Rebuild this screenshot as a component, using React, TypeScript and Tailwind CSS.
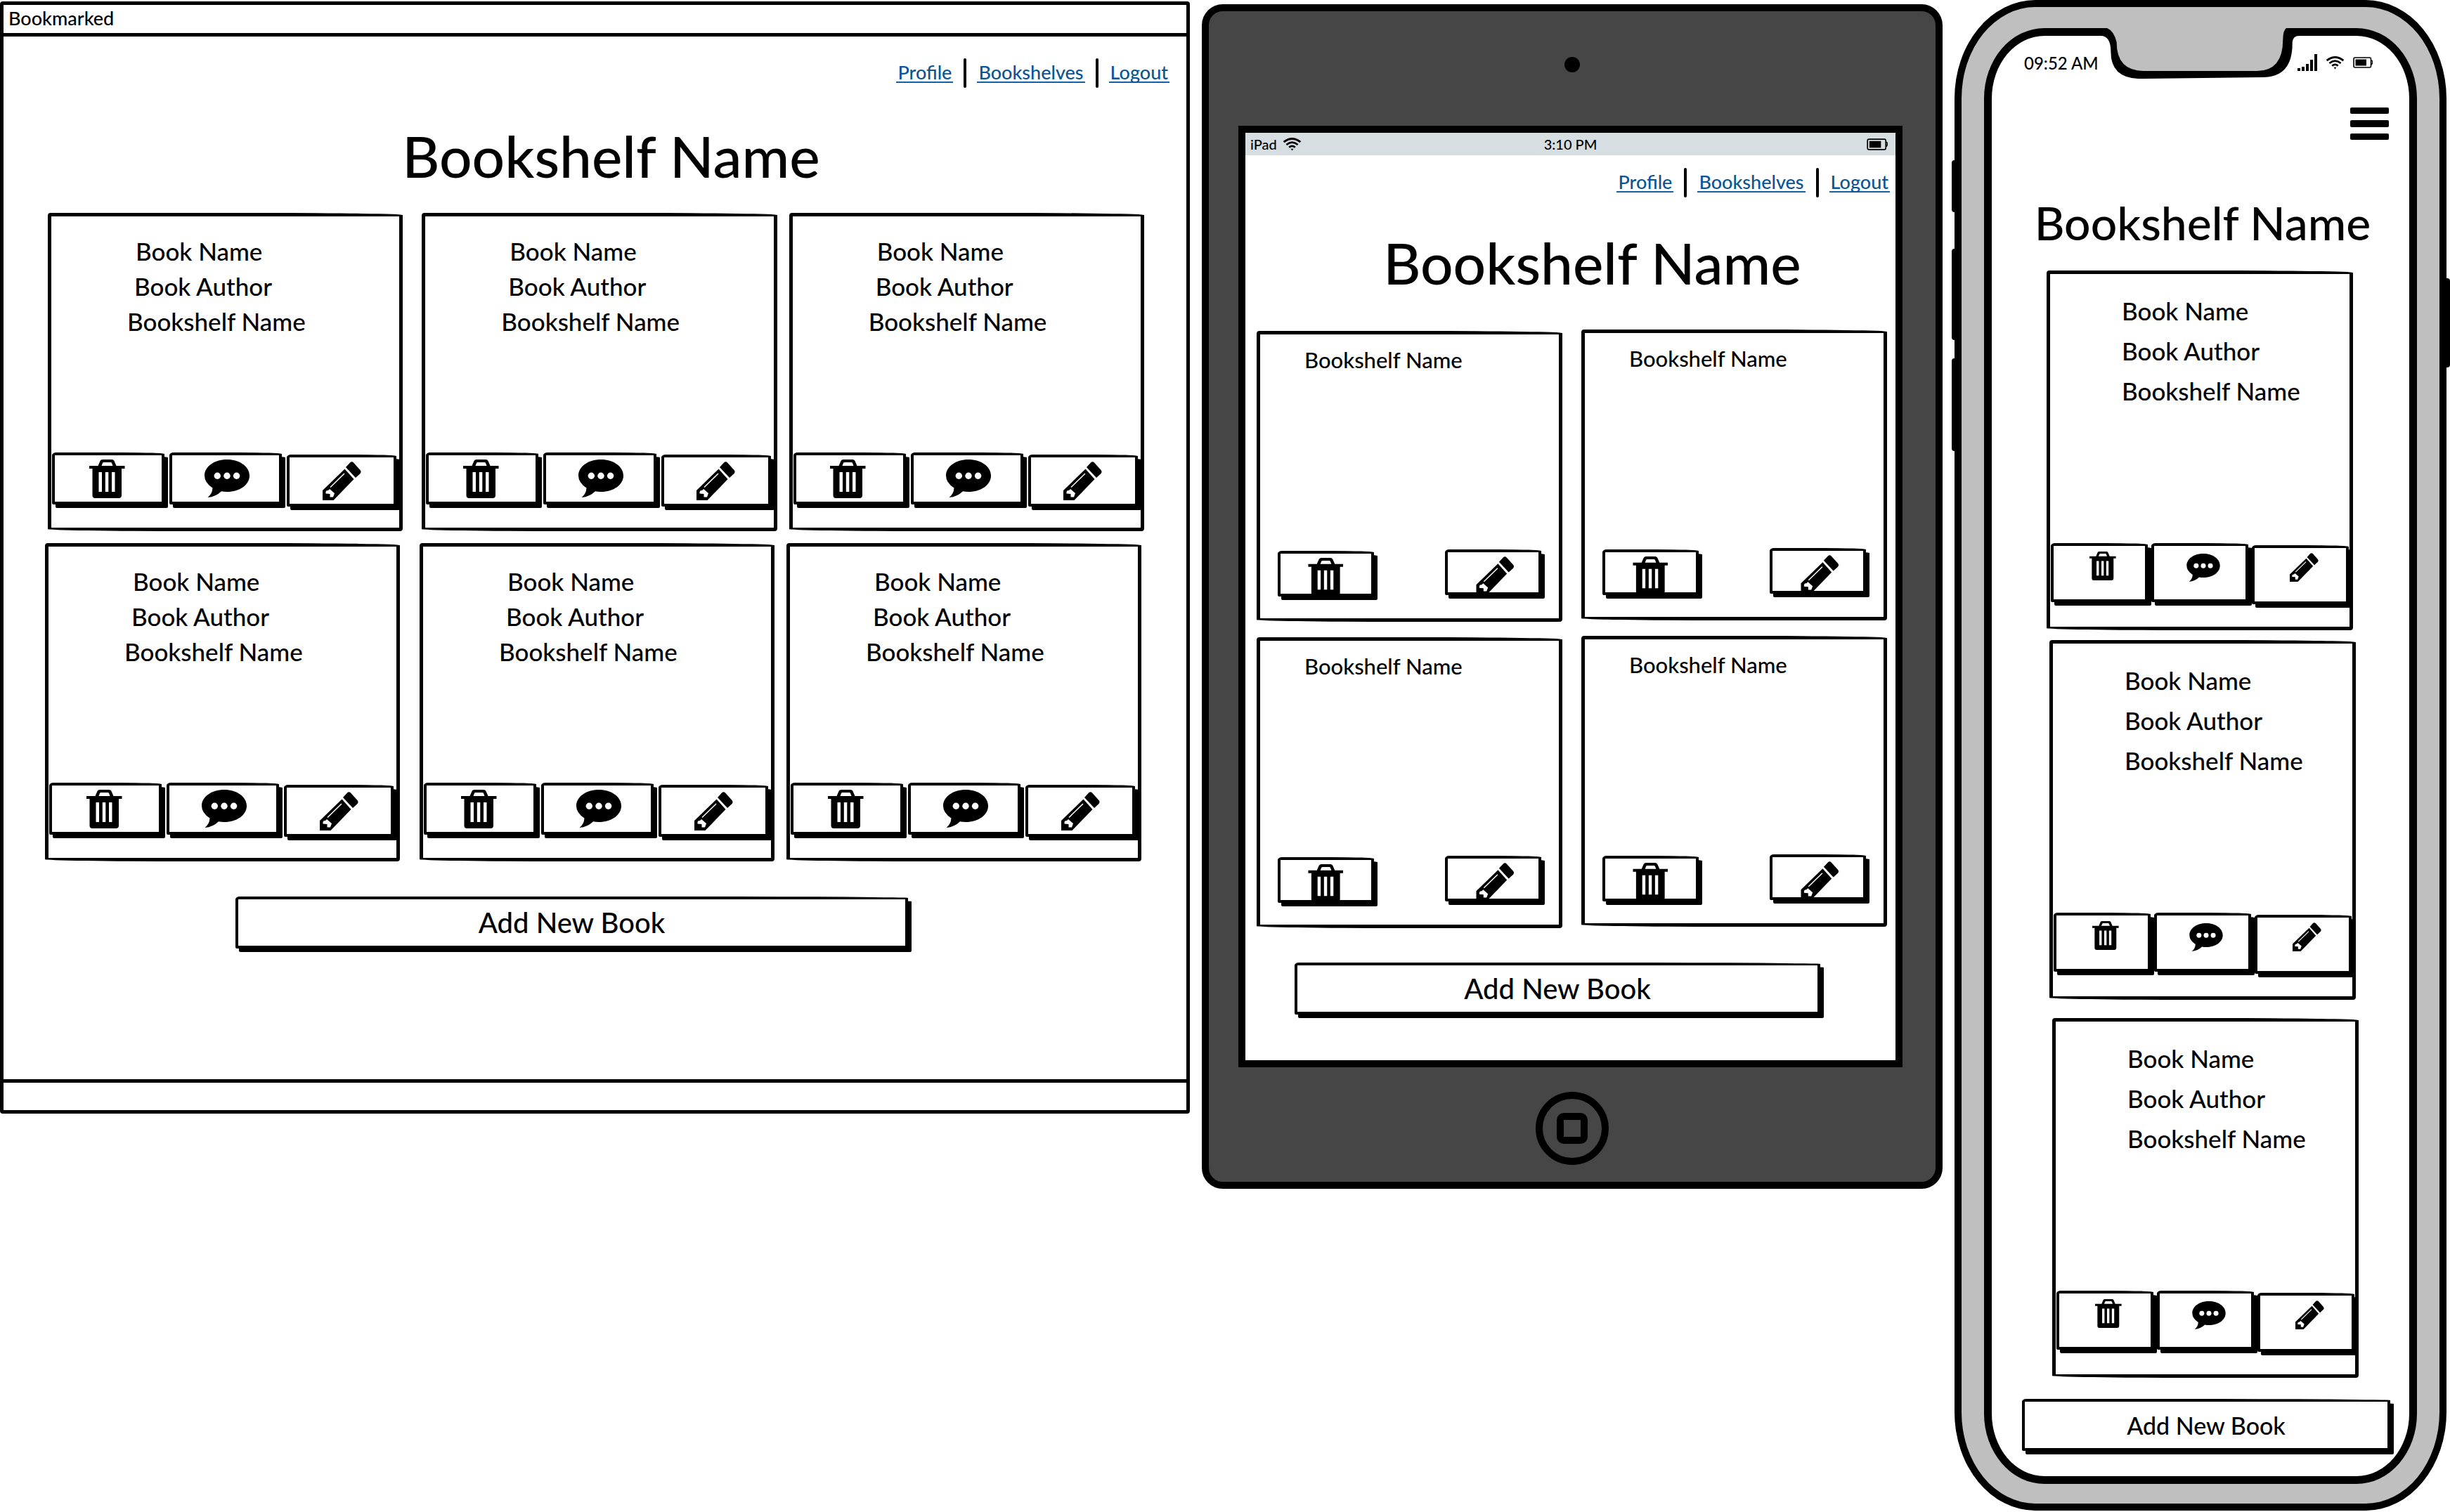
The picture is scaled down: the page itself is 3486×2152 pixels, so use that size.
import React from "react";

type Size = "desktop" | "tablet" | "phone";

const TrashIcon = ({ className }: { className: string }) => (
  <svg viewBox="0 0 51 55" className={className} aria-hidden="true">
    <path
      fillRule="evenodd"
      d="M12.5 9 15.5 2Q16.5 0 19 0H32Q34.500 0 35.500 2L38.500 9H50.500V13H46V51Q46 55 42 55H8.500Q4.500 55 4.500 51V13H0V9ZM17.500 9H33.500L32 5Q31.500 4 30.500 4H20.500Q19.500 4 19 5ZM13.500 18V46H18V18ZM22.800 18V46H27.300V18ZM32 18V46H36.500V18Z"
    />
  </svg>
);

const ChatIcon = ({ className }: { className: string }) => (
  <svg viewBox="0 0 64 54" className={className} aria-hidden="true">
    <path d="M32 0C50 0 64 10 64 23S50 46 32 46Q27.500 46 24 45.200Q16 53 4.500 54Q11 49 11.500 40.500Q0 33 0 23C0 10 14 0 32 0Z" />
    <g fill="#fff">
      <circle cx="18.300" cy="23.200" r="4.700" />
      <circle cx="32" cy="23.200" r="4.700" />
      <circle cx="45.600" cy="23.200" r="4.700" />
    </g>
  </svg>
);

const PencilIcon = ({ className }: { className: string }) => (
  <svg viewBox="0 0 55 55" className={className} aria-hidden="true">
    <path d="M0 41 31.500 10.500 44.500 25 15.500 55H0Z" />
    <path d="M33 8 39 1.500Q41.500-.8 44 1.500L53.500 12Q55.500 14.500 53.500 17L47 23Z" />
    <path d="M11 36.500 31 17" stroke="#fff" strokeWidth="1.500" />
    <path fill="#fff" d="M4.500 43Q5 40.500 8 41L10 39 17 45 15 50.500 10.500 50.500V46L4.500 45.500Z" />
  </svg>
);

const WifiIcon = ({ className }: { className: string }) => (
  <svg viewBox="0 0 27 20" className={className} aria-hidden="true" fill="none" stroke="#000" strokeWidth="3">
    <path d="M1 6.500Q13.500-3.500 26 6.500" />
    <path d="M5 10.500Q13.500 3.500 22 10.500" />
    <path d="M9 14.500Q13.500 10.500 18 14.500" />
    <path d="M11.500 16.500H15.500L13.500 19.500Z" fill="#000" stroke="none" />
  </svg>
);

const BatteryIcon = ({ className }: { className: string }) => (
  <svg viewBox="0 0 28 16" className={className} aria-hidden="true">
    <rect x="1" y="1" width="24.500" height="14" rx="2" fill="none" stroke="#000" strokeWidth="1.600" />
    <rect x="3.500" y="3.500" width="15.500" height="9" />
    <path d="M25.500 5Q28 5 27.500 8T25.500 11" fill="none" stroke="#000" strokeWidth="1.600" />
  </svg>
);

const SignalIcon = ({ className }: { className: string }) => (
  <svg viewBox="0 0 28 24" className={className} aria-hidden="true">
    <path d="M0 20H4V24H0ZM6 18H10V24H6ZM12 14H16V24H12ZM18 8H22V24H18ZM24 0H28V24H24Z" />
  </svg>
);

const icons = { Delete: TrashIcon, Comment: ChatIcon, Edit: PencilIcon };

const inset = {
  desktop: { Delete: "pt-[6px] pr-[4px]", Comment: "pt-[6px] pl-[4px]", Edit: "pt-[6px]" },
  tablet: { Delete: "pt-[6px]", Comment: "pt-[6px]", Edit: "pt-[6px] pl-[6px]" },
  phone: { Delete: "pt-[8px] pl-[10px]", Comment: "pt-[11px] pl-[10px]", Edit: "pt-[7px] pl-[10px]" },
};

const box = { desktop: "h-[74px] flex-1", tablet: "h-[65px] w-[137px]", phone: "h-[84px] flex-1" };

const glyph = {
  desktop: { Delete: "h-[55px] w-[51px]", Comment: "h-[54px] w-[64px]", Edit: "h-[55px] w-[55px]" },
  tablet: { Delete: "h-[54px] w-[51px]", Comment: "h-[54px] w-[64px]", Edit: "h-[54px] w-[55px]" },
  phone: { Delete: "h-[41px] w-[38px]", Comment: "h-[40px] w-[48px]", Edit: "h-[41px] w-[41px]" },
};

function ActionButton({ kind, size }: { kind: keyof typeof icons; size: Size }) {
  const Icon = icons[kind];
  return (
    <button
      type="button"
      aria-label={kind}
      className={`flex items-start justify-center rounded-[6px_60px_2px_2px/4px_2px_2px_2px] border-[4px] border-black bg-white shadow-[5px_5px_0_#000] ${box[size]} ${inset[size][kind]} ${
        kind === "Edit" && size !== "tablet" ? "mt-[3px]" : ""
      }`}
    >
      <Icon className={`shrink-0 ${glyph[size][kind]}`} />
    </button>
  );
}

const outline = "rounded-[4px_200px_4px_200px/4px_3px_4px_3px] border-[5px] border-black";

function BookCard({ size, className = "" }: { size: "desktop" | "phone"; className?: string }) {
  const desktop = size === "desktop";
  return (
    <article
      className={`flex flex-col text-[35px] ${outline} ${
        desktop ? "h-[453px] min-w-0 flex-1 pt-[24px] leading-[50px]" : "h-[512px] pt-[24px] leading-[57px]"
      } ${className}`}
    >
      <h2 className={desktop ? "pl-[120px]" : "pl-[102px]"}>Book Name</h2>
      <p className={desktop ? "pl-[118px]" : "pl-[102px]"}>Book Author</p>
      <p className={desktop ? "pl-[108px]" : "pl-[102px]"}>Bookshelf Name</p>
      <div className={`mt-auto flex ${desktop ? "mb-[30px] gap-[7px] pr-[4px] pl-px" : "mb-[32px] gap-[5px] pr-px pl-px"}`}>
        <ActionButton kind="Delete" size={size} />
        <ActionButton kind="Comment" size={size} />
        <ActionButton kind="Edit" size={size} />
      </div>
    </article>
  );
}

function ShelfCard() {
  return (
    <article className={`flex h-[414px] min-w-0 flex-1 flex-col pt-[16px] ${outline}`}>
      <h2 className="pl-[63px] text-[31px] leading-[40px]">Bookshelf Name</h2>
      <div className="mt-auto mb-[31px] flex items-start justify-between pr-[25px] pl-[25px]">
        <div className="pt-[2px]">
          <ActionButton kind="Delete" size="tablet" />
        </div>
        <ActionButton kind="Edit" size="tablet" />
      </div>
    </article>
  );
}

const navLink = "border-b-2 border-[#1462a5] px-[2px] text-[27px] leading-[26px] text-[#0b5596]";

function Nav({ className }: { className: string }) {
  return (
    <nav className={`flex items-center justify-end gap-[15px] ${className}`}>
      <a href="#profile" className={navLink}>Profile</a>
      <span className="h-[42px] w-[4px] rounded-full bg-black" />
      <a href="#bookshelves" className={navLink}>Bookshelves</a>
      <span className="h-[42px] w-[4px] rounded-full bg-black" />
      <a href="#logout" className={navLink}>Logout</a>
    </nav>
  );
}

function AddButton({ className }: { className: string }) {
  return (
    <button
      type="button"
      className={`block h-[74px] rounded-[6px_300px_2px_2px/4px_2px_2px_2px] border-[4px] border-black bg-white text-center shadow-[5px_5px_0_#000] ${className}`}
    >
      Add New Book
    </button>
  );
}

function Desktop() {
  return (
    <section className="mt-[2px] flex h-[1583px] flex-col rounded-[4px] border-[5px] border-black">
      <header className="flex h-[45px] shrink-0 items-center border-b-[5px] border-black pb-[3px] pl-[7px] text-[27px] leading-[32px]">
        Bookmarked
      </header>
      <Nav className="mt-[31px] pr-[24px]" />
      <h1 className="mt-[48px] pl-[46px] text-center text-[82px] leading-[96px]">Bookshelf Name</h1>
      <div className="mt-[34px] flex pr-[60px] pl-[63px]">
        <BookCard size="desktop" />
        <BookCard size="desktop" className="ml-[27px]" />
        <BookCard size="desktop" className="ml-[17px]" />
      </div>
      <div className="mt-[17px] flex pr-[64px] pl-[59px]">
        <BookCard size="desktop" />
        <BookCard size="desktop" className="ml-[28px]" />
        <BookCard size="desktop" className="ml-[17px]" />
      </div>
      <AddButton className="mt-[50px] mr-[396px] ml-[330px] text-[40px]" />
      <footer className="mt-auto h-[44px] border-t-[5px] border-black" />
    </section>
  );
}

function Tablet() {
  return (
    <section className="mr-px ml-px mt-[6px] rounded-[30px] border-[10px] border-black bg-[#464646] pr-[47px] pb-[24px] pl-[42px]">
      <div className="flex justify-center pt-[65px] pl-[5px]">
        <span className="h-[22px] w-[22px] rounded-full bg-black" />
      </div>
      <div className="mt-[76px] flex h-[1340px] flex-col border-[10px] border-black bg-white">
        <header className="grid h-[32px] shrink-0 grid-cols-3 items-center bg-[#d7dee1] px-[7px] text-[20px] leading-[30px]">
          <span className="flex items-center gap-[8px]">
            iPad <WifiIcon className="h-[19px] w-[27px]" />
          </span>
          <time className="text-center">3:10 PM</time>
          <BatteryIcon className="mr-[4px] h-[17px] w-[30px] justify-self-end" />
        </header>
        <Nav className="mt-[18px] pr-[8px]" />
        <h1 className="mt-[44px] pl-[62px] text-center text-[82px] leading-[96px]">Bookshelf Name</h1>
        <div className="mt-[48px] flex gap-[27px] pr-[12px] pl-[16px]">
          <div className="flex flex-1 flex-col gap-[22px] pt-[2px]">
            <div className="flex"><ShelfCard /></div>
            <div className="flex"><ShelfCard /></div>
          </div>
          <div className="flex flex-1 flex-col gap-[22px]">
            <div className="flex"><ShelfCard /></div>
            <div className="flex"><ShelfCard /></div>
          </div>
        </div>
        <AddButton className="mt-[49px] mr-[107px] ml-[70px] text-[40px]" />
      </div>
      <div className="flex justify-center pt-[35px] pl-[5px]">
        <div className="flex h-[104px] w-[104px] items-center justify-center rounded-full border-[10px] border-black">
          <div className="h-[44px] w-[44px] rounded-[10px] border-[10px] border-black" />
        </div>
      </div>
    </section>
  );
}

function Phone() {
  return (
    <section className="relative mr-[5px] h-[2150px] rounded-[115px/140px] border-[10px] border-black bg-[#bfbfbf] px-[32px] pt-[30px] pb-[28px]">
      <span className="absolute top-[218px] -left-[14px] h-[74px] w-[6px] rounded-l-[4px] bg-black" />
      <span className="absolute top-[344px] -left-[14px] h-[130px] w-[6px] rounded-l-[4px] bg-black" />
      <span className="absolute top-[500px] -left-[14px] h-[132px] w-[6px] rounded-l-[4px] bg-black" />
      <span className="absolute top-[386px] -right-[15px] h-[127px] w-[6px] rounded-r-[4px] bg-black" />
      <div className="relative flex h-full flex-col rounded-[86px/100px] border-[11px] border-black bg-white">
        <svg viewBox="0 0 276 72" preserveAspectRatio="none" className="absolute -top-[11px] left-[155px] h-[72px] w-[284px]" aria-hidden="true">
          <path d="M0 0H276V11Q266 10 265 20Q266 71 222 70L60 72Q14 74 14 34Q14 11 0 11Z" />
          <path fill="#bfbfbf" d="M6 -1Q18 2 22 20Q22 61 60 61H216Q252 61 252 16Q252 2 258 -1Z" />
        </svg>
        <header className="flex items-center justify-between pt-[24px] pr-[52px] pl-[46px]">
          <time className="text-[24px] leading-[30px]">09:52 AM</time>
          <span className="flex items-center gap-[12px] pb-[2px]">
            <SignalIcon className="h-[24px] w-[28px]" />
            <WifiIcon className="h-[19px] w-[27px]" />
            <BatteryIcon className="h-[16px] w-[28px]" />
          </span>
        </header>
        <button type="button" aria-label="Menu" className="mt-[48px] mr-[29px] flex w-[55px] flex-col gap-[9px] self-end">
          <span className="h-[9px] w-full rounded-[2px] bg-black" />
          <span className="h-[10px] w-full rounded-[2px] bg-black" />
          <span className="h-[9px] w-full rounded-[2px] bg-black" />
        </button>
        <h1 className="mt-[80px] pl-[6px] text-center text-[66px] leading-[76px]">Bookshelf Name</h1>
        <div className="mt-[30px] pr-[80px] pl-[78px]"><BookCard size="phone" /></div>
        <div className="mt-[14px] pr-[76px] pl-[82px]"><BookCard size="phone" /></div>
        <div className="mt-[26px] pr-[72px] pl-[86px]"><BookCard size="phone" /></div>
        <AddButton className="mt-[30px] mr-[27px] ml-[43px] text-[34px]" />
      </div>
    </section>
  );
}

export default function App() {
  return (
    <main className="grid min-h-screen grid-cols-[1693fr_1056fr_705fr] items-start gap-x-[16px] bg-white font-['Lato',sans-serif] font-medium text-black">
      <Desktop />
      <Tablet />
      <Phone />
    </main>
  );
}
